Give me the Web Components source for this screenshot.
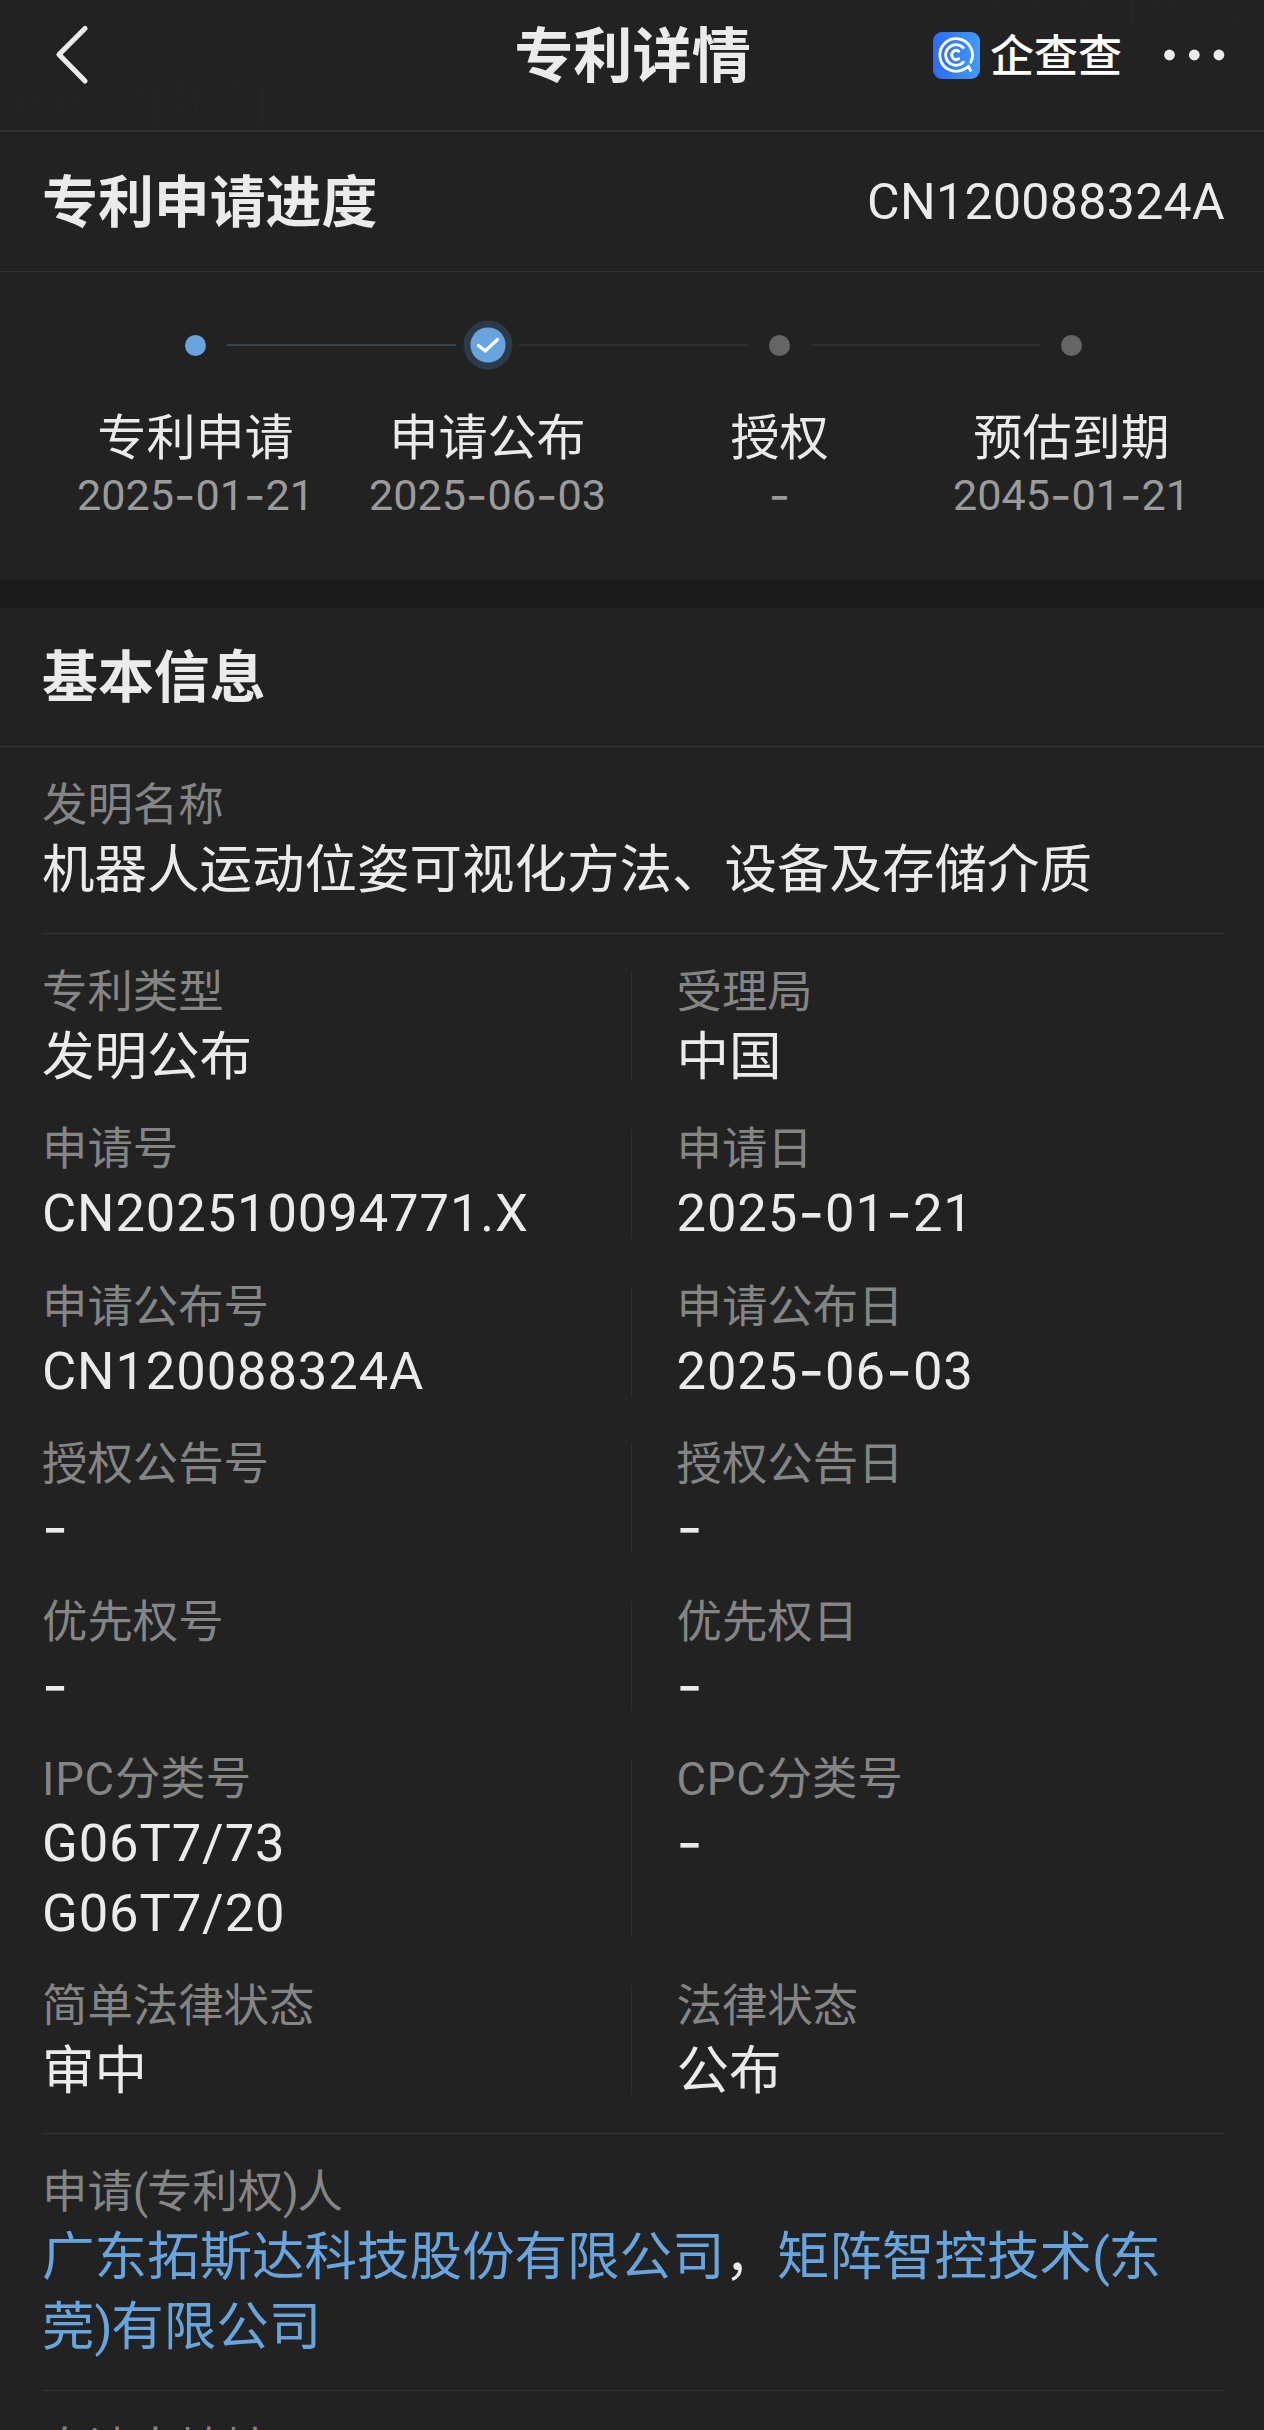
<!DOCTYPE html>
<html lang="zh-CN">
<head>
<meta charset="utf-8">
<title>专利详情</title>
<style>
  html, body { margin: 0; height: 2430px; overflow: hidden; background: #222; }
  body {
    width: 1264px;
    color: #ebebeb;
    font-family: Roboto, "Noto Sans CJK SC", sans-serif;
    --line: #323232;
    --muted: #858585;
    --blue: #68a5de;
  }
</style>
</head>
<body>
<patent-page></patent-page>

<script>
'use strict';

// Hyphens are set in Inter, its dash is wider and sits at mid digit height
const dashes = text => text.replace(/-/g, '<span class="dash">-</span>');
const dashStyle = `.dash { font-family: Inter, sans-serif; font-size: 1.08em; line-height: 0; font-weight: 400; vertical-align: -.035em; }`;
// Latin runs a touch wider and brackets a touch tighter than the CJK text round them
const tune = text => text
  .replace(/[A-Z]+/g, '<span class="latin">$&</span>')
  .replace(/[()]/g, '<span class="paren">$&</span>');

class AppHeader extends HTMLElement {
  constructor() {
    super();
    this.attachShadow({ mode: "open" }).innerHTML = `<style>
      :host {
        position: relative;
        display: grid;
        grid-template-columns: 1fr auto 1fr;
        align-items: center;
        box-sizing: border-box;
        height: 132px;
        padding: 0 39px 20px 52px;
        border-bottom: 2px solid var(--line);
      }
      .back { display: block; width: 40px; height: 64px; }
      h1 { margin: 0; padding-top: 4px; font-size: 59.2px; line-height: 80px; font-weight: 700; transform: translateX(-6px); }
      .right { display: flex; align-items: center; justify-content: flex-end; }
      .logo { width: 47px; height: 47px; margin-right: 10px; }
      .brand { font-size: 44px; line-height: 60px; padding-top: 3px; font-weight: 500; color: #fff; margin-right: 42px; }
      .more { width: 61px; height: 12px; }
      .mark {
        position: absolute;
        font-size: 51px;
        line-height: 60px;
        font-weight: 300;
        letter-spacing: 13.6px;
        color: #242424;
        white-space: nowrap;
      }
      .m1 { left: 14px; top: 69px; }
      .m2 { left: 992px; top: -35px; }
    </style>
    <span class="mark m1">eevq07j</span>
    <span class="mark m2">eevq07j</span>
    <svg class="back" viewBox="0 0 40 64" fill="none" stroke="#ebebeb" stroke-width="5.200" stroke-linecap="round" stroke-linejoin="round">
      <path d="M33 5.500 7 31.500 33 58"/>
    </svg>
    <h1><slot></slot></h1>
    <div class="right">
      <svg class="logo" viewBox="0 0 47 47" fill="none" stroke="#fff" stroke-width="2.800" stroke-linecap="round">
        <defs><linearGradient id="g"><stop stop-color="#2f6bf6"/><stop offset="1" stop-color="#3f9bf8"/></linearGradient></defs>
        <rect width="47" height="47" rx="9" fill="url(#g)" stroke="none"/>
        <path d="M37.800 30.200A16.300 16.300 0 1 0 30.500 37.600"/>
        <path d="M30.500 37.600 35.500 34.500 37.500 38.500"/>
        <path d="M30.300 15.800A10.300 10.300 0 1 0 30.300 30.200"/>
        <path d="M25.800 19.300A4.500 4.500 0 1 0 25.800 26.700"/>
      </svg>
      <span class="brand">企查查</span>
      <svg class="more" viewBox="0 0 61 12" fill="#ebebeb">
        <circle cx="5.500" cy="6" r="5.400"/><circle cx="30.300" cy="6" r="5.400"/><circle cx="54.900" cy="6" r="5.400"/>
      </svg>
    </div>`;
  }
}

class SectionTitle extends HTMLElement {
  constructor() {
    super();
    this.attachShadow({ mode: "open" }).innerHTML = `<style>
      :host {
        display: flex;
        align-items: center;
        justify-content: space-between;
        box-sizing: border-box;
        height: 140px;
        padding: 2px 39px 0 42px;
        border-bottom: 1px solid var(--line);
      }
      h2 { margin: 0; font-size: 55.9px; line-height: 80px; font-weight: 700; }
      ::slotted([slot="extra"]) { font-size: 50px; line-height: 70px; letter-spacing: .35px; padding-bottom: 1px; }
    </style>
    <h2><slot></slot></h2>
    <slot name="extra"></slot>`;
  }
}

class ProgressStep extends HTMLElement {
  connectedCallback() {
    const state = this.getAttribute("state");
    const icon = state === "current"
      ? `<svg width="50" height="50" viewBox="0 0 50 50">
          <circle cx="25" cy="25" r="24.500" fill="#2c3b47"/>
          <circle cx="25" cy="25" r="17.600" fill="#68a5de"/>
          <path d="M15.500 25.500 22.300 31 34.500 19.500" fill="none" stroke="#fff" stroke-width="3.200" stroke-linecap="round"/>
        </svg>`
      : `<i></i>`;
    this.attachShadow({ mode: "open" }).innerHTML = `<style>
      :host {
        display: flex;
        flex-direction: column;
        align-items: center;
        width: 292px;
      }
      .dot { display: flex; align-items: center; height: 50px; }
      i { width: 21px; height: 21px; border-radius: 50%; background: ${state === "done" ? "#68a5de" : "#656565"}; }
      .name { margin-top: 36px; font-size: 49.1px; line-height: 64px; white-space: nowrap; }
      .date { color: #9b9b9b; font-size: 43.2px; line-height: 52px; white-space: nowrap; }
      ${dashStyle}
    </style>
    <div class="dot">${icon}</div>
    <div class="name"><slot></slot></div>
    <div class="date">${dashes(this.getAttribute("date"))}</div>`;
  }
}

class ProgressSteps extends HTMLElement {
  constructor() {
    super();
    this.attachShadow({ mode: "open" }).innerHTML = `<style>
      :host {
        position: relative;
        display: flex;
        box-sizing: border-box;
        height: 308px;
        padding: 48px 0 0 49.5px;
      }
      /* connectors run between the dots, over the column edges */
      .lines { position: absolute; left: 227px; top: 72px; display: flex; gap: 63px; }
      .lines i { width: 229px; height: 2px; background: #2f2f2f; }
      .lines i:first-child { background: #35444f; }
    </style>
    <slot></slot>
    <div class="lines"><i></i><i></i><i></i></div>`;
  }
}

class InfoField extends HTMLElement {
  connectedCallback() {
    const num = this.hasAttribute("num");
    this.attachShadow({ mode: "open" }).innerHTML = `<style>
      :host { display: block; }
      .label { color: var(--muted); font-size: 45.4px; line-height: 57px; padding: 3px 0 1px; }
      .value { font-size: 52.5px; line-height: 70px; min-height: 70px; }
      .num { letter-spacing: .9px; margin-top: -1px; padding-bottom: 1px; }
      .latin { letter-spacing: .8px; }
      .paren { letter-spacing: -1.4px; }
      ${dashStyle}
      ::slotted(a) { color: var(--blue); text-decoration: none; }
    </style>
    <div class="label">${tune(this.getAttribute("label"))}</div>
    <div class="value${num ? " num" : ""}">${this.hasAttribute("value")
      ? this.getAttribute("value").split("|").map(dashes).join("<br>")
      : "<slot></slot>"}</div>`;
  }
}

class InfoRow extends HTMLElement {
  constructor() {
    super();
    this.attachShadow({ mode: "open" }).innerHTML = `<style>
      :host { display: grid; grid-template-columns: 589px 1px 1fr; }
      i { background: #2e2e2e; margin: 11px 0; }
      ::slotted(:last-child) { padding-left: 44.5px; }
    </style>
    <slot name="a"></slot><i></i><slot></slot>`;
  }
}

class InfoGroup extends HTMLElement {
  constructor() {
    super();
    this.attachShadow({ mode: "open" }).innerHTML = `<style>
      :host {
        display: flex;
        flex-direction: column;
        gap: 26.4px;
        margin: 0 39px 0 42px;
        padding: 27px 0 28px;
        border-bottom: 1px solid var(--line);
      }
    </style>
    <slot></slot>`;
  }
}

class PatentPage extends HTMLElement {
  constructor() {
    super();
    const rows = [
      ["专利类型", "发明公布", "受理局", "中国"],
      ["申请号", "CN202510094771.X", "申请日", "2025-01-21"],
      ["申请公布号", "CN120088324A", "申请公布日", "2025-06-03"],
      ["授权公告号", "-", "授权公告日", "-"],
      ["优先权号", "-", "优先权日", "-"],
      ["IPC分类号", "G06T7/73|G06T7/20", "CPC分类号", "-"],
      ["简单法律状态", "审中", "法律状态", "公布"],
    ];
    const field = (label, value, slot) =>
      `<info-field ${slot} label="${label}" value="${value}" ${/[0-9-]/.test(value) ? "num" : ""}></info-field>`;
    this.attachShadow({ mode: "open" }).innerHTML = `<style>
      :host { display: block; height: 2430px; overflow: hidden; }
      .gap { height: 28px; background: #1b1b1b; }
      .basic { height: 139px; }
      .rows { padding-bottom: 26.6px; }
      .paren { letter-spacing: -1.6px; }
    </style>
    <app-header>专利详情</app-header>
    <section-title>专利申请进度<span slot="extra">CN120088324A</span></section-title>
    <progress-steps>
      <progress-step state="done" date="2025-01-21">专利申请</progress-step>
      <progress-step state="current" date="2025-06-03">申请公布</progress-step>
      <progress-step date="-">授权</progress-step>
      <progress-step date="2045-01-21">预估到期</progress-step>
    </progress-steps>
    <div class="gap"></div>
    <section-title class="basic">基本信息</section-title>
    <info-group>
      <info-field label="发明名称">机器人运动位姿可视化方法、设备及存储介质</info-field>
    </info-group>
    <info-group class="rows">
      ${rows.map(r => `<info-row>${field(r[0], r[1], 'slot="a"')}${field(r[2], r[3], "")}</info-row>`).join("")}
    </info-group>
    <info-group>
      <info-field label="申请(专利权)人"><a>广东拓斯达科技股份有限公司</a>，<a>矩阵智控技术<span class="paren">(</span>东<br>莞<span class="paren">)</span>有限公司</a></info-field>
    </info-group>
    <info-group>
      <info-field label="申请人地址"></info-field>
    </info-group>`;
  }
}

customElements.define("app-header", AppHeader);
customElements.define("section-title", SectionTitle);
customElements.define("progress-step", ProgressStep);
customElements.define("progress-steps", ProgressSteps);
customElements.define("info-field", InfoField);
customElements.define("info-row", InfoRow);
customElements.define("info-group", InfoGroup);
customElements.define("patent-page", PatentPage);
</script>
</body>
</html>
